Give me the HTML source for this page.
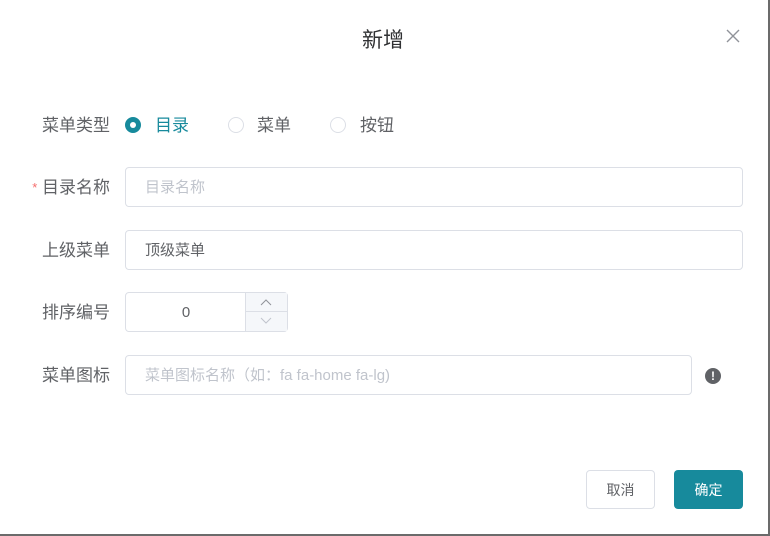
<!DOCTYPE html>
<html><head><meta charset="utf-8"><style>
*{margin:0;padding:0;box-sizing:border-box}
body{width:770px;height:536px;background:#6b6b6b;font-family:"Liberation Sans","Noto Sans CJK SC",sans-serif;position:relative;overflow:hidden}
.dlg{position:absolute;left:0;top:0;width:768px;height:534px;background:#fff}
.a{position:absolute}
.lbl{font-size:17px;color:#606266;width:110px;text-align:right;line-height:20px}
.inp{position:absolute;border:1px solid #dcdfe6;border-radius:4px;background:#fff;font-size:15px;line-height:40px;padding-left:19px}
.ph{color:#c0c4cc}
.radio{position:absolute;width:16px;height:16px;border-radius:50%;border:1px solid #dcdfe6;background:#fff}
</style></head><body><div class="dlg">
<div class="a" style="left:0;width:766px;top:27px;text-align:center;font-size:21px;color:#303133;line-height:28px">新增</div>
<svg class="a" style="left:726px;top:29px" width="14" height="14"><path d="M1 1L13 13M13 1L1 13" stroke="#909399" stroke-width="1.4"/></svg>

<div class="a lbl" style="left:0;top:116px">菜单类型</div>
<div class="radio" style="left:125px;top:117px;background:#178a9c;border-color:#178a9c"><div style="position:absolute;left:4px;top:4px;width:6px;height:6px;border-radius:50%;background:#fff"></div></div>
<div class="a" style="left:155px;top:116px;font-size:17px;color:#178a9c;line-height:20px">目录</div>
<div class="radio" style="left:228px;top:117px"></div>
<div class="a" style="left:257px;top:116px;font-size:17px;color:#606266;line-height:20px">菜单</div>
<div class="radio" style="left:330px;top:117px"></div>
<div class="a" style="left:360px;top:116px;font-size:17px;color:#606266;line-height:20px">按钮</div>

<div class="a lbl" style="left:0;top:178px"><span style="color:#f56c6c;font-size:13px;vertical-align:top">*</span> 目录名称</div>
<div class="inp ph" style="left:125px;top:167px;width:618px;height:40px">目录名称</div>

<div class="a lbl" style="left:0;top:241px">上级菜单</div>
<div class="inp" style="left:125px;top:230px;width:618px;height:40px;color:#606266">顶级菜单</div>

<div class="a lbl" style="left:0;top:303px">排序编号</div>
<div class="inp" style="left:125px;top:292px;width:163px;height:40px;padding:0;color:#606266">
<div style="position:absolute;left:0;width:120px;text-align:center;line-height:40px">0</div>
<div style="position:absolute;left:119px;top:0;width:42px;height:38px;background:#f5f7fa;border-left:1px solid #dcdfe6">
<div style="height:19px;border-bottom:1px solid #dcdfe6"></div></div>
<svg class="a" style="left:134px;top:6px" width="12" height="8"><path d="M1 6L6 1L11 6" fill="none" stroke="#909399"/></svg>
<svg class="a" style="left:134px;top:24px" width="12" height="8"><path d="M1 1L6 6L11 1" fill="none" stroke="#c0c4cc"/></svg>
</div>

<div class="a lbl" style="left:0;top:366px">菜单图标</div>
<div class="inp ph" style="left:125px;top:355px;width:567px;height:40px">菜单图标名称（如：fa fa-home fa-lg)</div>
<div class="a" style="left:705px;top:368px;width:16px;height:16px;border-radius:50%;background:#606266;color:#fff;font-size:12px;font-weight:bold;text-align:center;line-height:16px">!</div>

<div class="a" style="left:586px;top:470px;width:69px;height:39px;border:1px solid #dcdfe6;border-radius:4px;text-align:center;line-height:38px;font-size:14px;color:#606266">取消</div>
<div class="a" style="left:674px;top:470px;width:69px;height:39px;background:#178a9c;border-radius:4px;text-align:center;line-height:40px;font-size:14px;color:#fff">确定</div>
</div></body></html>
